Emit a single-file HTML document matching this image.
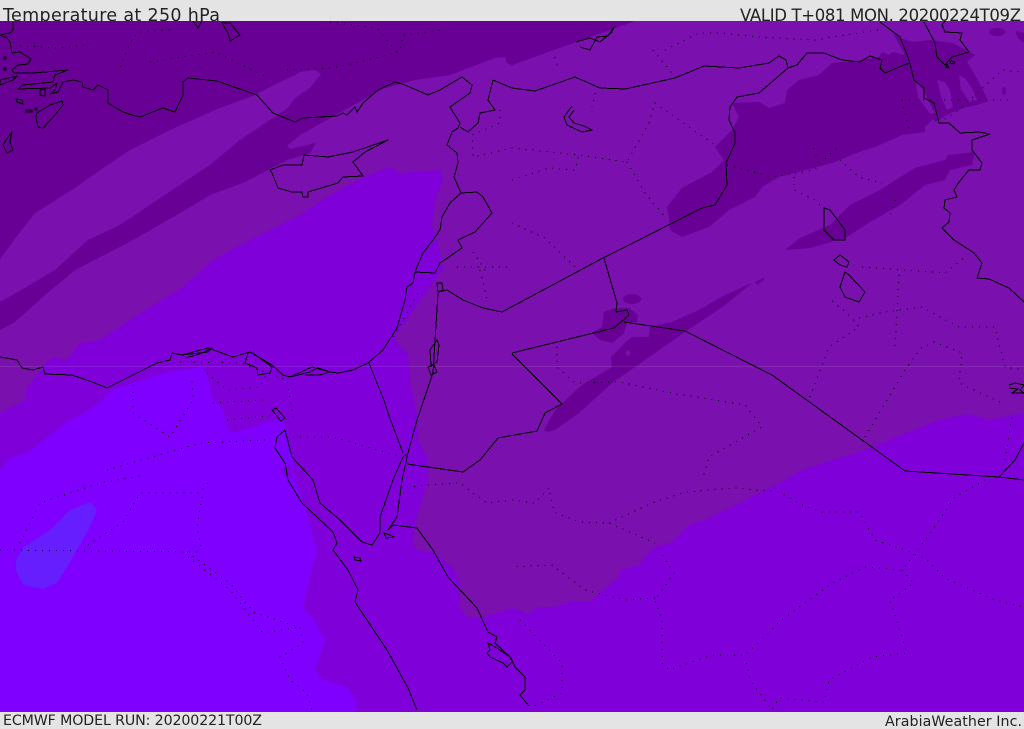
<!DOCTYPE html>
<html><head><meta charset="utf-8"><title>Temperature at 250 hPa</title>
<style>html,body{margin:0;padding:0;background:#e4e4e4;width:1024px;height:729px;overflow:hidden}svg{display:block}
text{font-family:"DejaVu Sans","Liberation Sans",sans-serif;fill:#222}
.c{fill:none;stroke:#000;stroke-width:1;shape-rendering:crispEdges;stroke-linejoin:round}
.d{fill:none;stroke:#000;stroke-width:1;stroke-dasharray:1 6;shape-rendering:crispEdges}
</style></head><body>
<svg width="1024" height="729" viewBox="0 0 1024 729" xmlns="http://www.w3.org/2000/svg">
<defs><clipPath id="m"><rect x="0" y="21" width="1024" height="691"/></clipPath></defs>
<rect width="1024" height="729" fill="#e4e4e4"/>
<text x="3" y="21" font-size="17.5" textLength="217">Temperature at 250 hPa</text>
<text x="740" y="21" font-size="16.5" textLength="281">VALID T+081 MON. 20200224T09Z</text>
<text x="3" y="725" font-size="14.2" textLength="259">ECMWF MODEL RUN: 20200221T00Z</text>
<text x="885" y="726" font-size="14.2" textLength="137">ArabiaWeather Inc.</text>
<g clip-path="url(#m)">
<rect x="0" y="21" width="1024" height="691" fill="#7a10ad"/>
<!-- dark top-left -->
<polygon fill="#690095" points="0,21 635,21 512,65 507,63 505,57 495,58 450,75 415,80 385,88 350,107 300,135 287,146 290,149 316,143 310,153 287,160 245,182 210,195 180,213 133,240 75,270 45,295 15,322 0,330"/>
<!-- mid tongue -->
<polygon fill="#7a10ad" points="0,259 14,240 35,213 72,190 100,170 130,150 170,130 215,110 255,95 270,87 295,75 300,72 315,70 321,74 310,88 295,98 288,108 270,120 240,140 210,165 180,185 150,205 120,225 88,240 55,270 30,285 0,302"/>
<!-- bright region -->
<polygon fill="#7f00d9" points="250,240 300,215 330,195 362,178 390,167 400,173 440,170 443,180 435,200 432,225 437,240 443,268 423,297 395,337 397,343 408,355 410,383 417,413 418,440 427,457 428,480 422,500 415,523 413,543 417,550 433,552 453,568 459,580 460,608 467,617 480,618 512,608 529,614 537,607 552,607 572,601 589,602 619,577 620,570 639,565 645,557 655,547 672,542 689,525 705,520 742,502 785,480 802,470 832,460 865,450 909,432 939,420 968,414 989,420 1024,413 1024,712 0,712 0,413 25,400 27,387 43,368 45,363 53,357 67,360 80,343 100,340 133,318 183,287 213,260"/>
<!-- brightest -->
<polygon fill="#7f00ff" points="0,470 10,458 27,453 60,427 70,420 90,410 113,390 133,383 167,372 203,367 208,380 212,397 223,410 227,427 233,433 260,425 283,417 288,437 293,460 295,480 310,523 317,553 312,567 303,607 315,622 325,640 315,670 323,680 347,687 355,700 356,712 0,712"/>
<polygon fill="#7f00d9" points="279,470 290,464 293,478 286,478"/>
<!-- blue patch -->
<polygon fill="#661eff" points="16,560 22,548 50,530 70,510 90,502 97,510 90,527 73,557 57,583 43,589 23,585 16,570"/>
<!-- dark patches right -->
<g fill="#690095">
<polygon points="667,207 682,188 712,172 724,160 715,147 732,130 739,117 732,103 759,102 769,108 785,103 787,90 799,80 819,75 832,63 862,60 879,57 882,52 895,57 903,62 915,83 922,97 935,117 925,127 925,132 902,135 875,147 859,152 832,163 779,177 762,187 755,197 729,210 709,227 682,237 670,230 669,218"/>
<polygon points="893,33 900,38 913,42 930,40 953,43 975,55 967,62 975,75 983,90 988,101 977,105 967,107 953,112 947,115 935,122 925,105 905,82 882,60 893,52 905,55"/>
<polygon points="785,250 800,238 830,225 850,205 880,190 915,168 945,160 948,155 975,152 972,165 950,170 945,180 925,185 900,205 870,222 845,238 810,248"/>
<polygon points="544,430 555,410 582,385 612,367 611,357 625,343 632,337 649,337 650,327 672,322 699,310 725,295 752,283 725,305 685,332 645,360 612,383 579,413 555,430 547,432"/>
<polygon points="755,282 765,277 763,281 757,285"/>
<polygon points="592,333 602,327 604,312 615,308 629,308 638,315 637,322 627,323 624,333 612,343 600,340"/>
<ellipse cx="632" cy="299" rx="9" ry="5"/>
<ellipse cx="997" cy="32" rx="8" ry="4"/>
<polygon points="1015,31 1024,33 1024,43 1018,38"/>
<ellipse cx="1004" cy="91" rx="2" ry="4"/>
</g>
<g fill="#7a10ad">
<polygon points="937,80 945,82 950,90 953,107 947,110 941,97"/>
<polygon points="959,75 965,78 973,90 977,100 970,102 961,90"/>
<polygon points="916,83 923,90 935,113 930,114 918,97"/>
<ellipse cx="628" cy="353" rx="2" ry="3"/>
</g>
<rect x="0" y="366" width="1024" height="1" fill="#fff" opacity=".1"/>
<!-- dotted borders -->
<g class="d">
<polyline points="120,67 130,43 138,32 173,30"/><polyline points="150,62 215,52 267,77"/><polyline points="287,70 333,68 400,52 403,35 442,30"/><polyline points="330,22 377,28 397,52"/><polyline points="20,46 60,48 90,44"/>
<polyline points="500,110 500,123 472,135 473,157 512,148 579,155 627,162 649,123 655,103 675,117 715,145"/><polyline points="595,93 592,107"/><polyline points="555,57 559,70"/><polyline points="653,50 675,77"/><polyline points="665,50 699,33 722,33 759,37 815,40 845,35 879,30"/><polyline points="512,180 549,168 575,170 579,155"/><polyline points="627,162 645,193 665,217"/><polyline points="512,223 545,238 575,267"/>
<polyline points="727,165 772,177 814,170 838,147"/><polyline points="814,148 819,165"/><polyline points="840,160 859,177 882,183"/><polyline points="794,177 794,190 815,200 822,207"/><polyline points="895,200 889,220"/><polyline points="902,100 1012,100"/><polyline points="902,100 909,130"/><polyline points="939,123 959,110 1002,70 1024,72"/>
<polyline points="557,347 557,367 575,383 619,382 672,393 745,405 762,427 709,457 702,480"/>
<polyline points="810,397 829,347 859,327 852,318 829,298"/><polyline points="859,318 885,312 922,307 959,327 995,327 1005,367 1024,370"/><polyline points="865,437 905,370 922,347 934,342 962,353 959,383 1002,403"/><polyline points="899,275 895,347"/><polyline points="862,267 945,273 965,257"/><polyline points="1005,460 1012,417"/>
<polyline points="512,500 535,503 549,488 554,512 579,522 609,523 655,543"/><polyline points="609,523 652,503 685,492 735,488 779,492 802,505 822,512 859,512 875,540 905,550 925,558 945,578 995,600 1024,607"/><polyline points="985,480 955,497 929,535 902,570 865,567 832,583 779,622 765,637 745,655 712,655 669,670 662,663 662,620 655,600 674,573 659,550"/><polyline points="902,570 914,583 890,600 907,653 872,657 829,680 824,702 779,698 772,710 750,680 745,657"/><polyline points="655,598 625,600 585,590 552,565 512,567"/><polyline points="520,620 562,663 562,693 532,707"/>
<polyline points="0,550 200,552"/><polyline points="20,543 40,503 100,483 145,475"/><polyline points="88,545 123,522 140,493 200,493 210,480"/><polyline points="202,497 197,527 202,552"/><polyline points="187,552 230,583 253,612 283,622 300,627 303,643 280,657 290,680 307,693 312,710"/><polyline points="188,557 230,590 263,633 300,627"/>
<polyline points="133,385 133,413 170,437 193,400 192,378"/><polyline points="107,470 200,443 267,440"/><polyline points="180,362 240,363 287,380 293,417"/><polyline points="207,373 227,390 260,387 267,373"/><polyline points="213,403 263,400"/><polyline points="227,420 277,415"/><polyline points="293,437 333,437 402,457"/><polyline points="393,337 420,290"/><polyline points="457,267 510,267"/><polyline points="480,270 488,303"/><polyline points="473,252 487,273"/><polyline points="407,487 428,485 460,483 473,493 487,503 512,500"/>
</g>
<!-- coastlines and borders -->
<g class="c">
<polyline points="13,22 13,30 10,33 0,35 7,38 10,42 12,53 20,52 31,59 28,64 18,65 12,70 14,73 33,73 68,70 55,75 53,82 23,85 18,89 50,88 57,83 55,90 50,94 58,92 63,82 73,80 82,82 83,87 93,90 98,85 108,90 108,103 123,112 132,115 140,117 163,108 175,112 183,95 183,82 188,78 217,81 257,95 273,113 295,122 303,118 337,116 343,113 347,115 355,107 357,112 363,103 378,90 395,82 405,85 428,95 440,90 462,77 472,85 470,93 450,107 460,123 458,128 452,132 447,145 457,153 458,163 454,177 461,193 450,203 442,217 440,230 433,240 423,253 415,272 413,283 407,287 405,300 397,328 383,350 368,363 353,370 338,373 330,372 312,367 290,377 283,375 272,365 250,352 233,357 208,348 182,355 172,353 170,360 157,363 133,375 107,388 95,383 72,375 45,374 43,367 33,370 22,368 17,360 0,357"/>
<polygon points="270,170 283,165 302,165 304,155 328,157 353,152 388,140 365,152 353,162 363,176 343,177 338,183 308,192 308,197 303,197 302,192 292,192 278,188 272,173"/>
<polygon points="36,117 38,127 43,128 55,115 63,105 62,101 50,105 37,113"/>
<polygon points="12,132 10,142 13,150 7,153 3,145 8,137"/>
<polygon points="222,23 230,23 240,35 230,41 228,33"/><polyline points="193,21 198,28 202,21"/>
<polygon points="0,80 17,76 13,80 0,85"/><rect x="4" y="57" width="2" height="2"/><rect x="4" y="68" width="2" height="2"/><rect x="35" y="108" width="2" height="2"/><polygon points="16,99 22,100 23,104 17,102"/><rect x="26" y="110" width="6" height="2"/><polygon points="40,90 45,89 45,96 40,95"/>
<polyline points="248,353 245,363 257,368 258,375 270,373 272,367 253,353"/>
<polyline points="182,355 208,352 212,348 200,354 185,358"/><polyline points="290,377 310,372 318,368 330,372 320,375 305,375"/>
<polyline points="285,430 277,437 275,448 285,463 288,480 302,503 333,532 337,543 333,550 348,570 358,590 355,602 387,650 408,688 417,710"/>
<polyline points="285,430 292,457 313,480 320,503 340,520 362,542 372,545 380,533 380,517 393,480 403,457 408,453 402,480 397,517 388,530 393,525 417,528 433,550 448,577 477,608 488,632 497,637 495,643 510,657 512,660 515,667 525,677 525,690 520,695 529,706"/>
<polygon points="272,410 276,408 285,418 281,421"/><polygon points="354,557 360,558 361,561 355,560"/><polygon points="384,533 390,535 394,537 386,538"/>
<polygon points="488,643 490,650 487,653 490,657 503,663 507,667 512,662 510,657 497,648"/>
<polyline points="408,453 417,420 433,373 438,293"/><polygon points="437,340 439,345 437,362 431,365 430,350"/><polygon points="428,367 434,365 437,372 431,375"/><polygon points="437,283 442,283 443,290 438,292"/>
<polyline points="439,292 447,290 463,300 483,308 502,312 603,258 639,240 702,208 715,205 727,185 726,163 735,143 735,133 729,120 730,107 737,97 759,93 788,68"/>
<polyline points="512,88 535,91 575,77 600,88 625,89 675,78 704,66 739,68 769,63 779,56 786,60 788,68 797,65 807,53 824,53 842,60 860,62 870,56 882,60 880,68 885,73 909,63"/>
<polyline points="493,80 512,88"/><polyline points="493,80 488,100 495,110 480,113 478,123 468,132 460,127"/>
<polyline points="880,22 900,37 909,60 914,80 924,88 924,98 934,103 939,123 949,123 960,133 979,132 990,134 972,140 972,150 982,163 980,170 969,170 959,182 954,190 957,197 945,200 944,208 950,213 949,222 942,228 954,240 974,253 982,263 977,278 989,279 1009,288 1024,302"/>
<polyline points="461,193 477,192 483,197 492,213 475,232 458,240 462,248 440,263 435,273 415,272"/>
<polyline points="369,363 385,403 388,413 403,453"/>
<polyline points="407,464 463,472 480,460 498,438 537,431 545,413 562,404 512,354"/>
<polyline points="512,353 614,328 629,315 627,310 616,312 617,303 604,258"/>
<polyline points="624,322 685,331 772,375 905,471 999,477 1024,480"/><polyline points="999,477 1015,460 1024,443"/>
<polyline points="576,42 590,38 600,42 612,32 614,27 608,36 597,37 590,50 580,47"/>
<polyline points="572,106 564,117 567,125 582,132 592,130 584,126 574,123 569,117 574,110"/>
<polygon points="824,208 830,210 845,230 845,240 834,240 824,230"/>
<polygon points="834,260 840,255 849,262 847,267 840,265"/>
<polygon points="845,272 849,275 865,292 859,302 845,297 840,287"/>
<polyline points="924,22 935,43 937,57 945,65 952,57 969,52 960,40 962,33 945,32 942,25 945,21"/>
<polygon points="951,61 955,62 954,64 950,63"/><polygon points="947,64 949,68 946,67"/>
<polyline points="1009,385 1015,383 1024,385 1020,390 1024,393 1012,393 1018,389 1009,388"/>
</g>
</g>
</svg>
</body></html>
